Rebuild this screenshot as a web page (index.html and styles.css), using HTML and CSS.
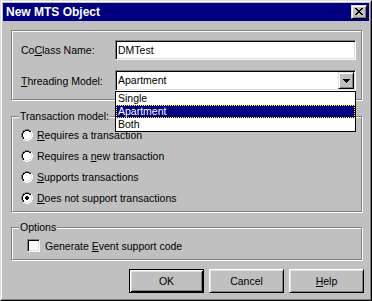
FILE: index.html
```html
<!DOCTYPE html>
<html>
<head>
<meta charset="utf-8">
<title>New MTS Object</title>
<link rel="stylesheet" href="styles.css">
</head>
<body>
<svg class="defs" width="0" height="0" aria-hidden="true">
  <symbol id="radio" viewBox="0 0 12 12">
    <path fill="#808080" d="M4 0h4v1h-4z M2 1h2v1h-2z M8 1h2v1h-2z M1 2h1v2h-1z M0 4h1v4h-1z M1 8h1v2h-1z"/>
    <path fill="#ffffff" d="M10 2h1v2h-1z M11 4h1v4h-1z M10 8h1v2h-1z M2 10h2v1h-2z M8 10h2v1h-2z M4 11h4v1h-4z"/>
    <path fill="#000000" d="M4 1h4v1h-4z M2 2h2v1h-2z M8 2h2v1h-2z M2 3h1v1h-1z M1 4h1v4h-1z M2 8h1v2h-1z"/>
    <path fill="#dfdfdf" d="M9 3h1v1h-1z M10 4h1v4h-1z M9 8h1v1h-1z M3 9h1v1h-1z M8 9h2v1h-2z M4 10h4v1h-4z"/>
    <path fill="#ffffff" d="M4 2h4v1h-4z M3 3h6v1h-6z M2 4h8v4h-8z M3 8h6v1h-6z M4 9h4v1h-4z"/>
  </symbol>
</svg>
<div class="window">
  <div class="frame">
    <div class="titlebar">
      <span class="title">New MTS Object</span>
      <span class="close">
        <svg width="8" height="7" viewBox="0 0 8 7" shape-rendering="crispEdges"><path fill="#000" d="M0 0h2v1h-2z M6 0h2v1h-2z M1 1h2v1h-2z M5 1h2v1h-2z M2 2h4v1h-4z M3 3h2v1h-2z M2 4h4v1h-4z M1 5h2v1h-2z M5 5h2v1h-2z M0 6h2v1h-2z M6 6h2v1h-2z"/></svg>
      </span>
    </div>
    <div class="content">
      <div class="group g-top">
        <div class="row">
          <span class="label">Co<u>C</u>lass Name:</span>
          <div class="field">DMTest</div>
        </div>
        <div class="row">
          <span class="label"><u>T</u>hreading Model:</span>
          <div class="combo">
            <span class="combo-text">Apartment</span>
            <span class="combo-btn">
              <svg width="7" height="4" viewBox="0 0 7 4" shape-rendering="crispEdges"><path fill="#000" d="M0 0h7v1h-7z M1 1h5v1h-5z M2 2h3v1h-3z M3 3h1v1h-1z"/></svg>
            </span>
            <ul class="listbox">
              <li>Single</li>
              <li class="sel">Apartment</li>
              <li>Both</li>
            </ul>
          </div>
        </div>
      </div>

      <div class="group g-trans">
        <span class="legend">Transaction model:</span>
        <div class="opt"><svg class="radio" viewBox="0 0 12 12" shape-rendering="crispEdges"><use href="#radio"/></svg><span><u>R</u>equires a transaction</span></div>
        <div class="opt"><svg class="radio" viewBox="0 0 12 12" shape-rendering="crispEdges"><use href="#radio"/></svg><span>Requires a <u>n</u>ew transaction</span></div>
        <div class="opt"><svg class="radio" viewBox="0 0 12 12" shape-rendering="crispEdges"><use href="#radio"/></svg><span><u>S</u>upports transactions</span></div>
        <div class="opt"><svg class="radio" viewBox="0 0 12 12" shape-rendering="crispEdges"><use href="#radio"/><path fill="#000" d="M5 4h2v1h-2z M4 5h4v2h-4z M5 7h2v1h-2z"/></svg><span><u>D</u>oes not support transactions</span></div>
      </div>

      <div class="group g-opts">
        <span class="legend">Options</span>
        <div class="check-row"><span class="checkbox"></span><span>Generate <u>E</u>vent support code</span></div>
      </div>

      <div class="buttons">
        <div class="btn default">OK</div>
        <div class="btn">Cancel</div>
        <div class="btn"><u>H</u>elp</div>
      </div>
    </div>
  </div>
</div>
</body>
</html>
```

FILE: styles.css
```css
* {
  box-sizing: border-box;
  margin: 0;
  padding: 0;
}

body {
  margin: 0;
  background: #c0c0c0;
  font-family: "Liberation Sans", Arial, sans-serif;
  font-size: 10.5px;
  color: #000;
}

u {
  text-decoration-skip-ink: none;
}

.defs {
  position: absolute;
  width: 0;
  height: 0;
  overflow: hidden;
}

.window {
  width: 372px;
  height: 301px;
  border: 1px solid;
  border-color: #dfdfdf #000 #000 #dfdfdf;
  background: #c0c0c0;
  overflow: hidden;
}

.frame {
  height: 100%;
  border: 1px solid;
  border-color: #fff #808080 #808080 #fff;
  padding: 1px;
}

.titlebar {
  height: 18px;
  background: #000080;
  display: flex;
  align-items: center;
  justify-content: space-between;
  padding: 0 2px 0 3px;
}

.title {
  color: #fff;
  font-weight: bold;
  font-size: 12px;
  line-height: 18px;
}

.close {
  width: 16px;
  height: 14px;
  background: #c0c0c0;
  border: 1px solid;
  border-color: #dfdfdf #000 #000 #dfdfdf;
  box-shadow: inset 1px 1px #fff, inset -1px -1px #808080;
}

.close svg {
  display: block;
  margin: 2px 0 0 3px;
}

.content {
  padding: 0 7px 0 8px;
}

.group {
  position: relative;
  border: 1px solid #808080;
  box-shadow: inset 1px 1px #fff, 1px 1px #fff;
}

.legend {
  position: absolute;
  top: -7px;
  left: 7px;
  line-height: 13px;
  padding: 0 1px;
  background: #c0c0c0;
}

/* top group */
.g-top {
  margin-top: 9px;
  padding: 9px 0 8px 0;
}

.row {
  display: flex;
  align-items: center;
}

.row + .row {
  margin-top: 10px;
}

.label {
  width: 103px;
  padding-left: 9px;
  white-space: nowrap;
}

.field {
  width: 241px;
  height: 20px;
  background: #fff;
  border: 1px solid;
  border-color: #808080 #fff #fff #808080;
  box-shadow: inset 1px 1px #000, inset -1px -1px #dfdfdf;
  padding-left: 2px;
  line-height: 18px;
}

.combo {
  position: relative;
  width: 241px;
  height: 21px;
  background: #fff;
  border: 1px solid;
  border-color: #808080 #fff #fff #808080;
  box-shadow: inset 1px 1px #000, inset -1px -1px #dfdfdf;
  padding: 1px;
  display: flex;
}

.combo-text {
  flex: 1;
  padding-left: 1px;
  line-height: 17px;
}

.combo-btn {
  width: 16px;
  height: 17px;
  background: #c0c0c0;
  border: 1px solid;
  border-color: #dfdfdf #000 #000 #dfdfdf;
  box-shadow: inset 1px 1px #fff, inset -1px -1px #808080;
}

.combo-btn svg {
  display: block;
  margin: 6px 0 0 4px;
}

.listbox {
  position: absolute;
  top: 20px;
  left: -1px;
  width: 241px;
  height: 41px;
  border: 1px solid #000;
  background: #fff;
  list-style: none;
  z-index: 2;
}

.listbox li {
  height: 13px;
  line-height: 13px;
  padding-left: 2px;
}

.listbox li.sel {
  background: #000080;
  color: #fff;
  border: 1px dotted #ff0;
  line-height: 11px;
  padding-left: 1px;
}

/* transaction group */
.g-trans {
  margin-top: 16px;
  padding: 7px 0 3px 9px;
}

.opt {
  display: flex;
  align-items: center;
  height: 21px;
  white-space: nowrap;
}

.radio {
  width: 12px;
  height: 12px;
  flex: none;
  margin-right: 4px;
  display: block;
}

/* options group */
.g-opts {
  margin-top: 15px;
  padding: 11px 0 7px 15px;
}

.check-row {
  display: flex;
  align-items: center;
  height: 13px;
  white-space: nowrap;
}

.checkbox {
  width: 13px;
  height: 13px;
  flex: none;
  margin-right: 5px;
  background: #fff;
  border: 1px solid;
  border-color: #808080 #fff #fff #808080;
  box-shadow: inset 1px 1px #000, inset -1px -1px #dfdfdf;
}

/* buttons */
.buttons {
  display: flex;
  justify-content: flex-end;
  gap: 5px;
  margin-top: 9px;
  margin-right: -2px;
}

.btn {
  width: 75px;
  height: 24px;
  display: flex;
  align-items: center;
  justify-content: center;
  background: #c0c0c0;
  border: 1px solid;
  border-color: #fff #000 #000 #fff;
  box-shadow: inset 1px 1px #dfdfdf, inset -1px -1px #808080;
}

.btn.default {
  border-color: #000;
  box-shadow: inset 1px 1px #fff, inset -1px -1px #000, inset 2px 2px #dfdfdf, inset -2px -2px #808080;
}
```
